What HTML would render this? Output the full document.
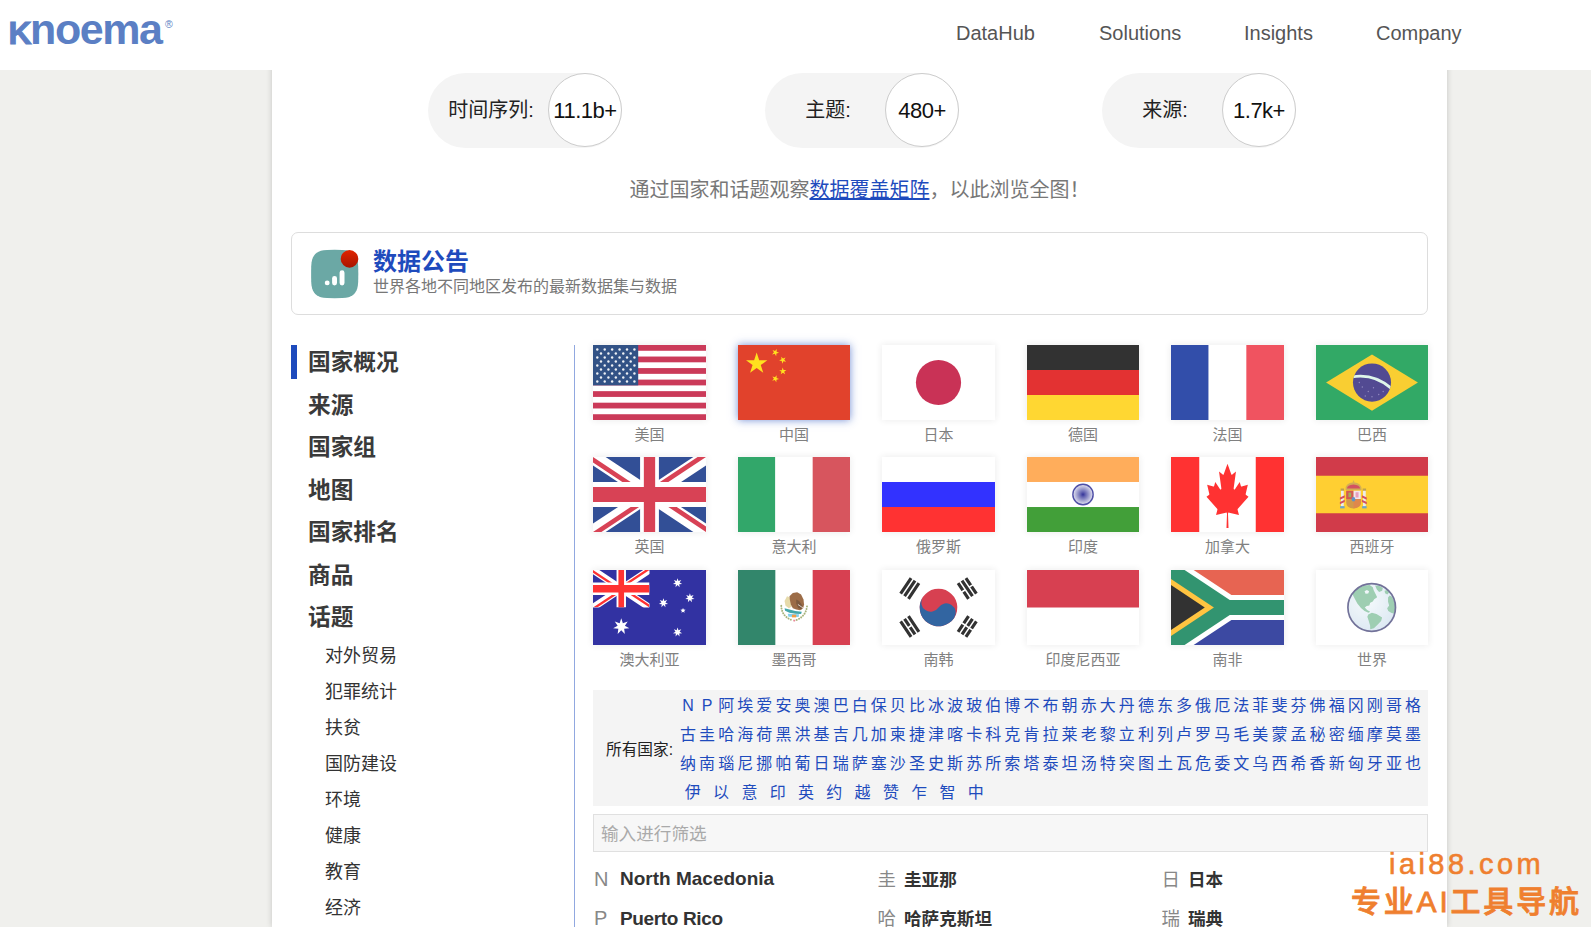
<!DOCTYPE html>
<html lang="zh-CN">
<head>
<meta charset="utf-8">
<title>Knoema</title>
<style>
*{box-sizing:border-box;margin:0;padding:0}
html,body{width:1591px;height:927px;overflow:hidden}
body{background:#f0f0ed;font-family:"Liberation Sans","Noto Sans CJK SC",sans-serif;color:#333;position:relative}
a{text-decoration:none;color:inherit}
.abs{position:absolute;white-space:nowrap}
#wrap{position:absolute;left:272px;top:0;width:1175px;height:927px;background:#fff;box-shadow:0 0 6px rgba(0,0,0,.18)}
#hdr{position:absolute;left:0;top:0;width:1591px;height:70px;background:#fff;z-index:5}
#logo{left:8.4px;top:4px;height:50px;line-height:50px;font-weight:bold;font-size:43px;color:#5b7fc4;letter-spacing:-1.45px}
#logo .k{font-variant:small-caps;font-size:1.05em;-webkit-text-stroke:1px #5b7fc4}
#logo sup{font-size:10.5px;font-weight:normal;letter-spacing:0;position:relative;top:-16px;vertical-align:baseline;margin-left:3.5px}
.nav{top:18px;height:30px;line-height:30px;font-size:20px;color:#555}
/* stats */
.pill{position:absolute;top:73px;width:194px;height:75px;border-radius:38px;background:#f4f4f4}
.pill .lb{position:absolute;left:0;top:0;width:126px;height:75px;line-height:74.8px;text-align:center;font-size:20px;color:#222;white-space:nowrap}
.pill .ci{position:absolute;right:0;top:0;width:74px;height:74px;border-radius:50%;background:#fff;border:1px solid #ccc;line-height:73px;text-align:center;font-size:22px;letter-spacing:-.5px;color:#111;white-space:nowrap}
#intro{left:272px;width:1175px;top:175px;height:30px;line-height:31.2px;text-align:center;font-size:20px;color:#777}
#intro a{color:#1e4bbd;text-decoration:underline}
#ann{position:absolute;left:291px;top:232px;width:1137px;height:83px;border:1px solid #ddd;border-radius:7px;background:#fff}
#ann .t{left:81px;top:13.5px;height:30px;line-height:30px;font-size:24px;font-weight:bold;color:#1e4bbd}
#ann .s{left:81px;top:42.6px;height:22px;line-height:22px;font-size:16px;color:#777}
/* sidebar */
#bar{position:absolute;left:291px;top:345px;width:6px;height:34px;background:#1e4bbd}
.m1{left:308px;height:34px;line-height:35px;font-size:22.7px;font-weight:bold;color:#3a3a3a}
.m2{left:325px;height:30px;line-height:31.5px;font-size:18px;color:#333}
#vline{position:absolute;left:574px;top:345px;width:1px;height:600px;background:#91a8e0}
/* flags */
.fl{position:absolute;width:113px;height:75px;opacity:.8;box-shadow:0 0 7px rgba(0,0,0,.1);background:#fff}
.fl>svg{display:block;width:100%;height:100%}
.fl.hov{opacity:.88;box-shadow:0 0 8px rgba(30,75,189,.7)}
.fn{position:absolute;width:113px;height:22px;line-height:24px;text-align:center;font-size:15px;color:#808080;white-space:nowrap}
/* index */
#idx{position:absolute;left:593px;top:690px;width:835px;height:116px;background:#f4f4f4}
#idx .lab{left:13px;top:47.5px;height:24px;line-height:24px;font-size:15.7px;color:#222}
#idx .row{position:absolute;left:87px;width:741px;height:29px;line-height:29px;font-size:16px;color:#1e4bbd;display:flex;justify-content:space-between;white-space:nowrap}
#idx .row a{display:block;width:16px;text-align:center}
#idx .row.last{justify-content:flex-start;left:91.8px}
#idx .row.last a{margin-right:12.3px}
#flt{position:absolute;left:593px;top:814px;width:835px;height:38px;border:1px solid #e0e0e0;background:#f7f7f7;font-size:17.6px;color:#aaa;line-height:38.5px;padding-left:7px;white-space:nowrap}
.cl{height:30px;line-height:30px;font-size:20px;color:#888}
.cn{height:30px;line-height:33.6px;font-size:17.6px;font-weight:bold;color:#333}
.cl.zh{font-size:18.5px;line-height:32.5px}
.cn.en{font-size:19px;line-height:30px}
#wm{position:absolute;z-index:9;color:#ef7f2f;white-space:nowrap}
</style>
</head>
<body>
<div id="wrap"></div>
<div id="hdr">
  <div id="logo" class="abs"><span class="k">k</span>noema<sup>®</sup></div>
  <a class="abs nav" style="left:956px">DataHub</a>
  <a class="abs nav" style="left:1099px">Solutions</a>
  <a class="abs nav" style="left:1244px">Insights</a>
  <a class="abs nav" style="left:1376px">Company</a>
</div>

<div class="pill" style="left:428px"><div class="lb">时间序列:</div><div class="ci">11.1b+</div></div>
<div class="pill" style="left:765px"><div class="lb">主题:</div><div class="ci">480+</div></div>
<div class="pill" style="left:1102px"><div class="lb">来源:</div><div class="ci">1.7k+</div></div>

<div id="intro" class="abs">通过国家和话题观察<a>数据覆盖矩阵</a>，以此浏览全图！</div>

<div id="ann">
  <svg class="abs" style="left:19px;top:16px" width="49" height="50" viewBox="0 0 49 50"><defs><linearGradient id="rg" x1="0" y1="0" x2="0" y2="1"><stop offset="0" stop-color="#e02400"/><stop offset="1" stop-color="#a81500"/></linearGradient></defs><path d="M47.30 25.00 L47.19 32.81 L46.85 36.42 L46.28 39.19 L45.49 41.47 L44.45 43.37 L43.17 44.96 L41.61 46.28 L39.76 47.34 L37.54 48.16 L34.84 48.74 L31.31 49.08 L23.70 49.20 L16.09 49.08 L12.56 48.74 L9.86 48.16 L7.64 47.34 L5.79 46.28 L4.23 44.96 L2.95 43.37 L1.91 41.47 L1.12 39.19 L0.55 36.42 L0.21 32.81 L0.10 25.00 L0.21 17.19 L0.55 13.58 L1.12 10.81 L1.91 8.53 L2.95 6.63 L4.23 5.04 L5.79 3.72 L7.64 2.66 L9.86 1.84 L12.56 1.26 L16.09 0.92 L23.70 0.80 L31.31 0.92 L34.84 1.26 L37.54 1.84 L39.76 2.66 L41.61 3.72 L43.17 5.04 L44.45 6.63 L45.49 8.53 L46.28 10.81 L46.85 13.58 L47.19 17.19Z" fill="#6ba8a5"/><circle cx="16.2" cy="33.9" r="2.45" fill="#fff"/><rect x="21.1" y="26.9" width="4.9" height="9.5" rx="2.45" fill="#fff"/><rect x="28.6" y="21.2" width="4.9" height="15.2" rx="2.45" fill="#fff"/><circle cx="38.5" cy="9.9" r="8.8" fill="url(#rg)"/></svg>
  <div class="abs t">数据公告</div>
  <div class="abs s">世界各地不同地区发布的最新数据集与数据</div>
</div>

<div id="bar"></div>
<a class="abs m1" style="top:345px">国家概况</a>
<a class="abs m1" style="top:388px">来源</a>
<a class="abs m1" style="top:430px">国家组</a>
<a class="abs m1" style="top:473px">地图</a>
<a class="abs m1" style="top:515px">国家排名</a>
<a class="abs m1" style="top:558px">商品</a>
<a class="abs m1" style="top:600px">话题</a>
<a class="abs m2" style="top:641px">对外贸易</a>
<a class="abs m2" style="top:677px">犯罪统计</a>
<a class="abs m2" style="top:713px">扶贫</a>
<a class="abs m2" style="top:749px">国防建设</a>
<a class="abs m2" style="top:785px">环境</a>
<a class="abs m2" style="top:821px">健康</a>
<a class="abs m2" style="top:857px">教育</a>
<a class="abs m2" style="top:893px">经济</a>
<div id="vline"></div>

<a class="fl" style="left:593px;top:345px;width:113px"><svg viewBox="0 0 150 100" preserveAspectRatio="none"><rect width="150" height="100" fill="#fff"/><rect y="0.000" width="150" height="7.692" fill="#bf0a30"/><rect y="15.385" width="150" height="7.692" fill="#bf0a30"/><rect y="30.769" width="150" height="7.692" fill="#bf0a30"/><rect y="46.154" width="150" height="7.692" fill="#bf0a30"/><rect y="61.538" width="150" height="7.692" fill="#bf0a30"/><rect y="76.923" width="150" height="7.692" fill="#bf0a30"/><rect y="92.308" width="150" height="7.692" fill="#bf0a30"/><rect width="60" height="53.846" fill="#002868"/><circle cx="5.70" cy="5.90" r="1.6" fill="#fff" fill-opacity=".92"/><circle cx="15.56" cy="5.90" r="1.6" fill="#fff" fill-opacity=".92"/><circle cx="25.42" cy="5.90" r="1.6" fill="#fff" fill-opacity=".92"/><circle cx="35.28" cy="5.90" r="1.6" fill="#fff" fill-opacity=".92"/><circle cx="45.14" cy="5.90" r="1.6" fill="#fff" fill-opacity=".92"/><circle cx="55.00" cy="5.90" r="1.6" fill="#fff" fill-opacity=".92"/><circle cx="10.60" cy="11.24" r="1.6" fill="#fff" fill-opacity=".92"/><circle cx="20.46" cy="11.24" r="1.6" fill="#fff" fill-opacity=".92"/><circle cx="30.32" cy="11.24" r="1.6" fill="#fff" fill-opacity=".92"/><circle cx="40.18" cy="11.24" r="1.6" fill="#fff" fill-opacity=".92"/><circle cx="50.04" cy="11.24" r="1.6" fill="#fff" fill-opacity=".92"/><circle cx="5.70" cy="16.58" r="1.6" fill="#fff" fill-opacity=".92"/><circle cx="15.56" cy="16.58" r="1.6" fill="#fff" fill-opacity=".92"/><circle cx="25.42" cy="16.58" r="1.6" fill="#fff" fill-opacity=".92"/><circle cx="35.28" cy="16.58" r="1.6" fill="#fff" fill-opacity=".92"/><circle cx="45.14" cy="16.58" r="1.6" fill="#fff" fill-opacity=".92"/><circle cx="55.00" cy="16.58" r="1.6" fill="#fff" fill-opacity=".92"/><circle cx="10.60" cy="21.92" r="1.6" fill="#fff" fill-opacity=".92"/><circle cx="20.46" cy="21.92" r="1.6" fill="#fff" fill-opacity=".92"/><circle cx="30.32" cy="21.92" r="1.6" fill="#fff" fill-opacity=".92"/><circle cx="40.18" cy="21.92" r="1.6" fill="#fff" fill-opacity=".92"/><circle cx="50.04" cy="21.92" r="1.6" fill="#fff" fill-opacity=".92"/><circle cx="5.70" cy="27.26" r="1.6" fill="#fff" fill-opacity=".92"/><circle cx="15.56" cy="27.26" r="1.6" fill="#fff" fill-opacity=".92"/><circle cx="25.42" cy="27.26" r="1.6" fill="#fff" fill-opacity=".92"/><circle cx="35.28" cy="27.26" r="1.6" fill="#fff" fill-opacity=".92"/><circle cx="45.14" cy="27.26" r="1.6" fill="#fff" fill-opacity=".92"/><circle cx="55.00" cy="27.26" r="1.6" fill="#fff" fill-opacity=".92"/><circle cx="10.60" cy="32.60" r="1.6" fill="#fff" fill-opacity=".92"/><circle cx="20.46" cy="32.60" r="1.6" fill="#fff" fill-opacity=".92"/><circle cx="30.32" cy="32.60" r="1.6" fill="#fff" fill-opacity=".92"/><circle cx="40.18" cy="32.60" r="1.6" fill="#fff" fill-opacity=".92"/><circle cx="50.04" cy="32.60" r="1.6" fill="#fff" fill-opacity=".92"/><circle cx="5.70" cy="37.94" r="1.6" fill="#fff" fill-opacity=".92"/><circle cx="15.56" cy="37.94" r="1.6" fill="#fff" fill-opacity=".92"/><circle cx="25.42" cy="37.94" r="1.6" fill="#fff" fill-opacity=".92"/><circle cx="35.28" cy="37.94" r="1.6" fill="#fff" fill-opacity=".92"/><circle cx="45.14" cy="37.94" r="1.6" fill="#fff" fill-opacity=".92"/><circle cx="55.00" cy="37.94" r="1.6" fill="#fff" fill-opacity=".92"/><circle cx="10.60" cy="43.28" r="1.6" fill="#fff" fill-opacity=".92"/><circle cx="20.46" cy="43.28" r="1.6" fill="#fff" fill-opacity=".92"/><circle cx="30.32" cy="43.28" r="1.6" fill="#fff" fill-opacity=".92"/><circle cx="40.18" cy="43.28" r="1.6" fill="#fff" fill-opacity=".92"/><circle cx="50.04" cy="43.28" r="1.6" fill="#fff" fill-opacity=".92"/><circle cx="5.70" cy="48.62" r="1.6" fill="#fff" fill-opacity=".92"/><circle cx="15.56" cy="48.62" r="1.6" fill="#fff" fill-opacity=".92"/><circle cx="25.42" cy="48.62" r="1.6" fill="#fff" fill-opacity=".92"/><circle cx="35.28" cy="48.62" r="1.6" fill="#fff" fill-opacity=".92"/><circle cx="45.14" cy="48.62" r="1.6" fill="#fff" fill-opacity=".92"/><circle cx="55.00" cy="48.62" r="1.6" fill="#fff" fill-opacity=".92"/></svg></a>
<div class="fn" style="left:593px;top:423px;width:113px">美国</div>
<a class="fl hov" style="left:738px;top:345px;width:112px"><svg viewBox="0 0 150 100" preserveAspectRatio="none"><rect width="150" height="100" fill="#de2910"/><polygon points="25.00,10.00 28.37,20.36 39.27,20.36 30.45,26.77 33.82,37.14 25.00,30.73 16.18,37.14 19.55,26.77 10.73,20.36 21.63,20.36" fill="#ffde00"/><polygon points="45.71,12.57 48.10,9.83 46.23,6.72 49.57,8.14 51.96,5.40 51.64,9.02 54.98,10.44 51.44,11.25 51.12,14.87 49.25,11.76" fill="#ffde00"/><polygon points="55.05,20.71 58.31,19.11 57.80,15.51 60.33,18.12 63.59,16.52 61.89,19.73 64.42,22.34 60.84,21.71 59.14,24.93 58.63,21.33" fill="#ffde00"/><polygon points="55.19,33.63 58.82,33.50 59.82,30.00 61.07,33.42 64.70,33.29 61.84,35.52 63.08,38.94 60.07,36.91 57.21,39.15 58.21,35.65" fill="#ffde00"/><polygon points="46.10,41.88 49.49,43.16 51.76,40.32 51.60,43.95 54.99,45.23 51.49,46.19 51.32,49.82 49.33,46.79 45.82,47.75 48.09,44.91" fill="#ffde00"/></svg></a>
<div class="fn" style="left:738px;top:423px;width:112px">中国</div>
<a class="fl" style="left:882px;top:345px;width:113px"><svg viewBox="0 0 150 100" preserveAspectRatio="none"><rect width="150" height="100" fill="#fff"/><circle cx="75" cy="50" r="30" fill="#bc002d"/></svg></a>
<div class="fn" style="left:882px;top:423px;width:113px">日本</div>
<a class="fl" style="left:1027px;top:345px;width:112px"><svg viewBox="0 0 3 3" preserveAspectRatio="none"><rect width="3" height="1" fill="#000"/><rect y="1" width="3" height="1" fill="#dd0000"/><rect y="2" width="3" height="1" fill="#ffce00"/></svg></a>
<div class="fn" style="left:1027px;top:423px;width:112px">德国</div>
<a class="fl" style="left:1171px;top:345px;width:113px"><svg viewBox="0 0 3 2" preserveAspectRatio="none"><rect width="1" height="2" fill="#002395"/><rect x="1" width="1" height="2" fill="#fff"/><rect x="2" width="1" height="2" fill="#ed2939"/></svg></a>
<div class="fn" style="left:1171px;top:423px;width:113px">法国</div>
<a class="fl" style="left:1316px;top:345px;width:112px"><svg viewBox="0 0 150 100" preserveAspectRatio="none"><rect width="150" height="100" fill="#009440"/><polygon points="13.5,50 75,12.5 136.5,50 75,87.5" fill="#f8c300"/><circle cx="75" cy="50" r="25.5" fill="#281e78"/><clipPath id="brc"><circle cx="75" cy="50" r="25.5"/></clipPath><path d="M48 42.5 Q78 37.5 101 58" fill="none" stroke="#d8f5e6" stroke-width="3.8" clip-path="url(#brc)"/><g fill="#bdb6e6" opacity=".55"><circle cx="62" cy="56" r=".9"/><circle cx="70" cy="62" r=".9"/><circle cx="77" cy="57" r=".9"/><circle cx="84" cy="66" r=".9"/><circle cx="66" cy="68" r=".9"/><circle cx="90" cy="62" r=".9"/><circle cx="75" cy="69" r=".9"/><circle cx="58" cy="50" r=".9"/><circle cx="82" cy="45" r=".9"/></g></svg></a>
<div class="fn" style="left:1316px;top:423px;width:112px">巴西</div>
<a class="fl" style="left:593px;top:457px;width:113px"><svg viewBox="0 0 60 30" preserveAspectRatio="none"><clipPath id="gbt"><path d="M30,15 h30 v15 z v15 h-30 z h-30 v-15 z v-15 h30 z"/></clipPath><path d="M0,0 v30 h60 v-30 z" fill="#00247d"/><path d="M0,0 L60,30 M60,0 L0,30" stroke="#fff" stroke-width="6"/><path d="M0,0 L60,30 M60,0 L0,30" clip-path="url(#gbt)" stroke="#cf142b" stroke-width="4"/><path d="M30,0 v30 M0,15 h60" stroke="#fff" stroke-width="10"/><path d="M30,0 v30 M0,15 h60" stroke="#cf142b" stroke-width="6"/></svg></a>
<div class="fn" style="left:593px;top:535px;width:113px">英国</div>
<a class="fl" style="left:738px;top:457px;width:112px"><svg viewBox="0 0 3 2" preserveAspectRatio="none"><rect width="1" height="2" fill="#009246"/><rect x="1" width="1" height="2" fill="#fff"/><rect x="2" width="1" height="2" fill="#ce2b37"/></svg></a>
<div class="fn" style="left:738px;top:535px;width:112px">意大利</div>
<a class="fl" style="left:882px;top:457px;width:113px"><svg viewBox="0 0 3 3" preserveAspectRatio="none"><rect width="3" height="1" fill="#fff"/><rect y="1" width="3" height="1" fill="#0000ff"/><rect y="2" width="3" height="1" fill="#ff0000"/></svg></a>
<div class="fn" style="left:882px;top:535px;width:113px">俄罗斯</div>
<a class="fl" style="left:1027px;top:457px;width:112px"><svg viewBox="0 0 150 100" preserveAspectRatio="none"><rect width="150" height="34" fill="#ff9933"/><rect y="33.3" width="150" height="33.4" fill="#fff"/><rect y="66.7" width="150" height="33.3" fill="#138808"/><radialGradient id="ing"><stop offset="0" stop-color="#000080"/><stop offset=".25" stop-color="#000080" stop-opacity=".75"/><stop offset="1" stop-color="#000080" stop-opacity=".12"/></radialGradient><circle cx="75" cy="50" r="13.6" fill="url(#ing)"/><circle cx="75" cy="50" r="13.6" fill="none" stroke="#000080" stroke-width="1.9" stroke-opacity=".85"/></svg></a>
<div class="fn" style="left:1027px;top:535px;width:112px">印度</div>
<a class="fl" style="left:1171px;top:457px;width:113px"><svg viewBox="0 0 9600 4800" preserveAspectRatio="none"><rect width="9600" height="4800" fill="#fff"/><rect width="2400" height="4800" fill="#ff0000"/><rect x="7200" width="2400" height="4800" fill="#ff0000"/><g transform="translate(4800 2400) scale(.96 1.02) translate(-4800 -2330)"><path d="M4890 4430 l-45-863a95 95 0 0 1 111-98l859 151-116-320a65 65 0 0 1 20-73l941-762-212-99a65 65 0 0 1-34-79l186-572-542 115a65 65 0 0 1-73-38l-105-247-423 454a65 65 0 0 1-111-57l204-1052-327 189a65 65 0 0 1-91-27l-332-652-332 652a65 65 0 0 1-91 27l-327-189 204 1052a65 65 0 0 1-111 57l-423-454-105 247a65 65 0 0 1-73 38l-542-115 186 572a65 65 0 0 1-34 79l-212 99 941 762a65 65 0 0 1 20 73l-116 320 859-151a95 95 0 0 1 111 98l-45 863z" fill="#ff0000"/></g></svg></a>
<div class="fn" style="left:1171px;top:535px;width:113px">加拿大</div>
<a class="fl" style="left:1316px;top:457px;width:112px"><svg viewBox="0 0 150 100" preserveAspectRatio="none"><rect width="150" height="100" fill="#c60b1e"/><rect y="25" width="150" height="50" fill="#ffc400"/><g><rect x="33.5" y="43" width="3.6" height="24" fill="#e8e8e8"/><rect x="63" y="43" width="3.6" height="24" fill="#e8e8e8"/><rect x="32.3" y="65.5" width="6" height="3" fill="#4a8fb5"/><rect x="61.8" y="65.5" width="6" height="3" fill="#4a8fb5"/><rect x="33" y="42" width="4.6" height="3" fill="#b08a20"/><rect x="62.5" y="42" width="4.6" height="3" fill="#b08a20"/><path d="M32 54 L38.5 51 L38.5 54 L32 57 Z M32 60 L38.5 57 L38.5 60 L32 63Z M61.5 51 L68 54 L68 57 L61.5 54 Z M61.5 57 L68 60 L68 63 L61.5 60Z" fill="#c8283c"/><path d="M40.5 45 H60 V61 Q60 68 50.2 68.5 Q40.5 68 40.5 61 Z" fill="#c8801e"/><rect x="40.5" y="45" width="9.8" height="11" fill="#c83228"/><rect x="50.3" y="45" width="9.7" height="11" fill="#f0e0e6"/><rect x="43.5" y="47.5" width="3.6" height="6" fill="#8a9a30"/><rect x="53" y="47" width="4" height="7" fill="#e070a0" opacity=".8"/><path d="M50.3 56 H60 V61 Q60 67 50.3 68.5 Z" fill="#d86a20"/><ellipse cx="50.2" cy="56.2" rx="2.5" ry="3" fill="#3c78b4"/><path d="M39.5 44 Q39 34.5 50.2 33.8 Q61.5 34.5 61 44 Z" fill="#c89a28"/><path d="M41.5 42 Q41.5 37 50.2 36.5 Q59 37 59 42 Z" fill="#c8283c"/><rect x="49.4" y="31.5" width="1.7" height="4" fill="#c8a028"/></g></svg></a>
<div class="fn" style="left:1316px;top:535px;width:112px">西班牙</div>
<a class="fl" style="left:593px;top:570px;width:113px"><svg viewBox="0 0 120 80" preserveAspectRatio="none"><rect width="120" height="80" fill="#00008b"/><svg x="0" y="0" width="60" height="40" viewBox="0 0 60 30" preserveAspectRatio="none"><clipPath id="aut"><path d="M30,15 h30 v15 z v15 h-30 z h-30 v-15 z v-15 h30 z"/></clipPath><path d="M0,0 L60,30 M60,0 L0,30" stroke="#fff" stroke-width="6"/><path d="M0,0 L60,30 M60,0 L0,30" clip-path="url(#aut)" stroke="#ff0000" stroke-width="4"/><path d="M30,0 v30 M0,15 h60" stroke="#fff" stroke-width="10"/><path d="M30,0 v30 M0,15 h60" stroke="#ff0000" stroke-width="6"/></svg><polygon points="30.00,51.50 31.72,56.73 36.88,54.81 33.86,59.42 38.58,62.26 33.10,62.77 33.82,68.23 30.00,64.26 26.18,68.23 26.90,62.77 21.42,62.26 26.14,59.42 23.12,54.81 28.28,56.73" fill="#fff"/><polygon points="89.80,8.80 90.78,11.77 93.71,10.68 91.99,13.30 94.67,14.91 91.56,15.20 91.97,18.30 89.80,16.05 87.63,18.30 88.04,15.20 84.93,14.91 87.61,13.30 85.89,10.68 88.82,11.77" fill="#fff"/><polygon points="102.90,24.80 103.88,27.77 106.81,26.68 105.09,29.30 107.77,30.91 104.66,31.20 105.07,34.30 102.90,32.05 100.73,34.30 101.14,31.20 98.03,30.91 100.71,29.30 98.99,26.68 101.92,27.77" fill="#fff"/><polygon points="74.80,30.20 75.78,33.17 78.71,32.08 76.99,34.70 79.67,36.31 76.56,36.60 76.97,39.70 74.80,37.45 72.63,39.70 73.04,36.60 69.93,36.31 72.61,34.70 70.89,32.08 73.82,33.17" fill="#fff"/><polygon points="95.60,40.40 96.37,42.24 98.36,42.40 96.84,43.70 97.30,45.65 95.60,44.60 93.90,45.65 94.36,43.70 92.84,42.40 94.83,42.24" fill="#fff"/><polygon points="89.80,61.40 90.78,64.37 93.71,63.28 91.99,65.90 94.67,67.51 91.56,67.80 91.97,70.90 89.80,68.65 87.63,70.90 88.04,67.80 84.93,67.51 87.61,65.90 85.89,63.28 88.82,64.37" fill="#fff"/></svg></a>
<div class="fn" style="left:593px;top:648px;width:113px">澳大利亚</div>
<a class="fl" style="left:738px;top:570px;width:112px"><svg viewBox="0 0 150 100" preserveAspectRatio="none"><rect width="150" height="100" fill="#fff"/><rect width="50" height="100" fill="#006847"/><rect x="100" width="50" height="100" fill="#ce1126"/><path d="M57.9 47.8 Q58.5 61.4 71.5 66.6" fill="none" stroke="#7f8f3c" stroke-width="2.6" stroke-dasharray="0.1 3.3" stroke-linecap="round" stroke-opacity=".85"/><path d="M92.4 48.5 Q91.0 61.4 78.6 66.6" fill="none" stroke="#7f8f3c" stroke-width="2.6" stroke-dasharray="0.1 3.3" stroke-linecap="round" stroke-opacity=".85"/><path d="M62.4 41.4 L65.6 34.9 L68.9 36.2 L70.8 41.4 L72.1 48.5 L68.2 51.1 L63.7 47.8Z" fill="#d6c272" opacity=".75"/><path d="M68.9 34.9 L73.4 30.7 L79.3 29.6 L84.5 32.6 L87.7 39.4 L88.5 45.9 L87.2 51.1 L83.2 53.5 L78.0 52.7 L73.4 51.1 L70.8 45.9 L69.5 40.1Z" fill="#84481a"/><path d="M78.0 39.4 L81.9 41.4 L86.1 47.2 L85.1 52.7 L80.6 50.7 L78.0 44.6Z" fill="#5c300e"/><path d="M80.2 45.9 L87.1 50.7" fill="none" stroke="#fff" stroke-width="1.2" stroke-opacity=".8"/><path d="M62.4 51.1 L68.9 52.7 L76.7 54.6 L85.4 55.5 L84.5 58.8 L76.7 58.3 L68.9 57.0 L63.1 54.4Z" fill="#149096"/><path d="M66.6 58.3 L81.9 59.0 L81.2 62.8 L67.6 62.2Z" fill="#62c6ec"/><path d="M72.2 59.6 L78.0 59.6 L78.0 63.2 L72.2 63.2Z" fill="#f0861a"/><path d="M73.7 66.3 L77.0 66.3 L76.3 68.5 L74.4 68.5Z" fill="#d8304a" opacity=".7"/></svg></a>
<div class="fn" style="left:738px;top:648px;width:112px">墨西哥</div>
<a class="fl" style="left:882px;top:570px;width:113px"><svg viewBox="-36 -24 72 48" preserveAspectRatio="none"><rect fill="#fff" x="-36" y="-24" width="72" height="48"/><g transform="rotate(-56.3099325)"><path d="M-6-25H6M-6-22H6M-6-19H6M-6,19H6M-6,22H6M-6,25H6" stroke="#000" stroke-width="2"/><path stroke="#fff" stroke-width="1" d="M0,17v10"/><circle fill="#ce1126" r="12"/><path fill="#003f8a" d="M0-12A6,6 0 0 0 0,0A6,6 0 0 1 0,12A12,12 0 0 1 0,-12Z"/></g><g transform="rotate(-123.6900675)"><path d="M-6-25H6M-6-22H6M-6-19H6M-6,19H6M-6,22H6M-6,25H6" stroke="#000" stroke-width="2"/><path stroke="#fff" stroke-width="1" d="M0-23.5v3M0,17v3.5M0,23.5v3"/></g></svg></a>
<div class="fn" style="left:882px;top:648px;width:113px">南韩</div>
<a class="fl" style="left:1027px;top:570px;width:112px"><svg viewBox="0 0 3 2" preserveAspectRatio="none"><rect width="3" height="2" fill="#fff"/><rect width="3" height="1" fill="#ce1126"/></svg></a>
<div class="fn" style="left:1027px;top:648px;width:112px">印度尼西亚</div>
<a class="fl" style="left:1171px;top:570px;width:113px"><svg viewBox="0 0 90 60" preserveAspectRatio="none"><clipPath id="zat"><path d="m0 0 45 30L0 60z"/></clipPath><clipPath id="zaf"><path d="m0 0h90v60H0z"/></clipPath><path fill="#e23e28" d="m0 0h90v30H45z"/><path fill="#0c1c8c" d="m0 60h90V30H45z"/><g stroke-width="20" fill="none" clip-path="url(#zaf)"><path stroke="#fff" d="M90 30H45L0 0v60l45-30"/><path fill="#000" stroke="#ffb612" clip-path="url(#zat)" d="m0 0 45 30L0 60"/><path stroke="#007a4d" d="m0 0 45 30h45M0 60l45-30" stroke-width="12"/></g></svg></a>
<div class="fn" style="left:1171px;top:648px;width:113px">南非</div>
<a class="fl" style="left:1316px;top:570px;width:112px"><svg viewBox="0 0 113 75"><rect width="113" height="75" fill="#fff"/><radialGradient id="wdg" cx=".4" cy=".35" r=".8"><stop offset="0" stop-color="#f4f9fc"/><stop offset="1" stop-color="#cfe0ee"/></radialGradient><clipPath id="wdc"><circle cx="56.5" cy="37.5" r="24"/></clipPath><circle cx="56.2" cy="37.5" r="24.3" fill="url(#wdg)"/><g clip-path="url(#wdc)" fill="#86c2a0"><path d="M36.7 23.9 L39.9 20.2 L43.5 17.5 L49.0 15.4 L54.1 14.7 L57.3 17.0 L58.2 20.2 L60.1 23.9 L61.7 27.1 L58.7 29.1 L57.3 31.5 L54.7 32.8 L53.8 35.4 L51.1 35.9 L49.2 37.4 L51.6 40.0 L54.7 41.8 L52.9 42.9 L49.0 41.1 L45.4 38.1 L41.7 33.5 L39.0 28.5Z"/><path d="M59.6 15.4 L63.7 15.6 L67.4 17.9 L66.7 20.7 L63.7 21.8 L61.4 19.4Z"/><path d="M52.7 44.5 L56.4 42.7 L61.0 44.1 L66.7 47.5 L65.7 51.1 L62.1 54.8 L58.4 58.5 L54.7 59.4 L54.6 55.6 L52.9 50.2 L51.8 46.9Z"/><path d="M72.7 27.3 L74.3 25.3 L76.6 26.7 L78.4 30.3 L79.8 34.4 L80.2 39.0 L78.9 43.8 L75.8 42.9 L72.9 41.1 L71.8 38.3 L73.8 35.6 L72.7 31.7Z"/><path d="M69.2 20.7 L72.0 19.8 L73.8 22.1 L72.0 24.4 L69.7 23.0Z"/><path d="M49.0 21.1 L51.3 19.8 L53.6 21.1 L52.7 23.4 L50.0 23.6Z" fill="#eef5fa"/></g><circle cx="56.2" cy="37.5" r="24" fill="none" stroke="#4f4f80" stroke-width="1.7"/></svg></a>
<div class="fn" style="left:1316px;top:648px;width:112px">世界</div>

<div id="idx">
  <div class="abs lab">所有国家:</div>
  <div class="row" style="top:1px"><a>N</a><a>P</a><a>阿</a><a>埃</a><a>爱</a><a>安</a><a>奥</a><a>澳</a><a>巴</a><a>白</a><a>保</a><a>贝</a><a>比</a><a>冰</a><a>波</a><a>玻</a><a>伯</a><a>博</a><a>不</a><a>布</a><a>朝</a><a>赤</a><a>大</a><a>丹</a><a>德</a><a>东</a><a>多</a><a>俄</a><a>厄</a><a>法</a><a>菲</a><a>斐</a><a>芬</a><a>佛</a><a>福</a><a>冈</a><a>刚</a><a>哥</a><a>格</a></div>
  <div class="row" style="top:30px"><a>古</a><a>圭</a><a>哈</a><a>海</a><a>荷</a><a>黑</a><a>洪</a><a>基</a><a>吉</a><a>几</a><a>加</a><a>柬</a><a>捷</a><a>津</a><a>喀</a><a>卡</a><a>科</a><a>克</a><a>肯</a><a>拉</a><a>莱</a><a>老</a><a>黎</a><a>立</a><a>利</a><a>列</a><a>卢</a><a>罗</a><a>马</a><a>毛</a><a>美</a><a>蒙</a><a>孟</a><a>秘</a><a>密</a><a>缅</a><a>摩</a><a>莫</a><a>墨</a></div>
  <div class="row" style="top:59px"><a>纳</a><a>南</a><a>瑙</a><a>尼</a><a>挪</a><a>帕</a><a>葡</a><a>日</a><a>瑞</a><a>萨</a><a>塞</a><a>沙</a><a>圣</a><a>史</a><a>斯</a><a>苏</a><a>所</a><a>索</a><a>塔</a><a>泰</a><a>坦</a><a>汤</a><a>特</a><a>突</a><a>图</a><a>土</a><a>瓦</a><a>危</a><a>委</a><a>文</a><a>乌</a><a>西</a><a>希</a><a>香</a><a>新</a><a>匈</a><a>牙</a><a>亚</a><a>也</a></div>
  <div class="row last" style="top:88px"><a>伊</a><a>以</a><a>意</a><a>印</a><a>英</a><a>约</a><a>越</a><a>赞</a><a>乍</a><a>智</a><a>中</a></div>
</div>

<div id="flt">输入进行筛选</div>

<div class="abs cl" style="left:594px;top:864px">N</div><a class="abs cn en" style="left:620px;top:864px">North Macedonia</a>
<div class="abs cl" style="left:594px;top:903px">P</div><a class="abs cn en" style="left:620px;top:903.5px;letter-spacing:-.35px">Puerto Rico</a>
<div class="abs cl zh" style="left:877.5px;top:864px">圭</div><a class="abs cn" style="left:904px;top:864px">圭亚那</a>
<div class="abs cl zh" style="left:877.5px;top:903px">哈</div><a class="abs cn" style="left:904px;top:903px">哈萨克斯坦</a>
<div class="abs cl zh" style="left:1161.5px;top:864px">日</div><a class="abs cn" style="left:1188px;top:864px">日本</a>
<div class="abs cl zh" style="left:1161.5px;top:903px">瑞</div><a class="abs cn" style="left:1188px;top:903px">瑞典</a>

<div id="wm" class="abs" style="left:1389px;top:846.5px;font-size:29px;line-height:34px;letter-spacing:3.45px;-webkit-text-stroke:.6px #ef7f2f">iai88.com</div>
<div id="wm2" class="abs" style="left:1351px;top:883px;font-size:30px;line-height:38px;letter-spacing:2.8px;font-weight:500;-webkit-text-stroke:.8px #ef7f2f;color:#ef7f2f;z-index:9">专业AI工具导航</div>
</body>
</html>
